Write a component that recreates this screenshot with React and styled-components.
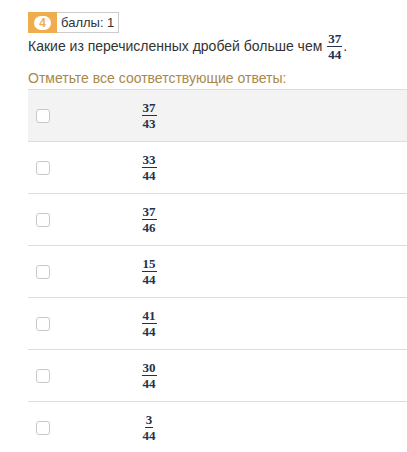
import React from "react";
import styled, { createGlobalStyle } from "styled-components";

const Global = createGlobalStyle`
  html, body { margin: 0; padding: 0; background: #fff; }
  body { font-family: "Liberation Sans", Arial, sans-serif; color: #333; }
`;

const Page = styled.div`
  padding: 12px 0 0 28px;
  width: 379px;
  overflow: hidden;
`;

const Header = styled.div`
  display: flex;
  align-items: stretch;
  height: 21px;
`;

const Number = styled.div`
  background: #f0ad4e;
  width: 29px;
  display: flex;
  align-items: center;
  justify-content: center;
`;

const Pill = styled.span`
  background: #fff;
  color: #f0ad4e;
  font-size: 12px;
  font-weight: bold;
  border-radius: 8px;
  width: 17px;
  height: 14px;
  line-height: 14px;
  text-align: center;
`;

const Points = styled.div`
  border: 1px solid #ccc;
  border-left: none;
  padding: 0 4px;
  font-size: 13px;
  line-height: 19px;
  color: #333;
`;

const Question = styled.div`
  display: flex;
  align-items: center;
  font-size: 14px;
  color: #333;
  margin-top: 1px;
  height: 24px;
`;

const Hint = styled.div`
  margin: 11px 0 2px;
  font-size: 14px;
  color: #a8884a;
  height: 18px;
  line-height: 18px;
`;

const Table = styled.div`
  border-top: 1px solid #ddd;
`;

const Row = styled.div`
  display: flex;
  align-items: center;
  height: 51px;
  border-bottom: 1px solid #ddd;
  background: ${(p) => (p.$shaded ? "#f3f3f3" : "#fff")};
`;

const Check = styled.span`
  width: 12px;
  height: 12px;
  border: 1px solid #c8c8c8;
  border-radius: 3px;
  background: #fff;
  margin-left: 8px;
  flex: none;
`;

const FracCell = styled.div`
  width: 28px;
  margin-left: 85px;
  display: flex;
  justify-content: center;
`;

const Frac = styled.span`
  display: inline-flex;
  flex-direction: column;
  align-items: center;
  font-family: "Liberation Serif", "Times New Roman", serif;
  font-weight: bold;
  font-size: 13px;
  line-height: 11px;
  color: #26304a;
  margin: ${(p) => (p.$inline ? "0 1px 0 5px" : "0")};
`;

const Num = styled.span`
  padding: 0 1px 2px;
  border-bottom: 1px solid #26304a;
`;

const Den = styled.span`
  padding: 2px 1px 0;
`;

const Fraction = ({ n, d, inline }) => (
  <Frac $inline={inline}>
    <Num>{n}</Num>
    <Den>{d}</Den>
  </Frac>
);

const answers = [
  [37, 43],
  [33, 44],
  [37, 46],
  [15, 44],
  [41, 44],
  [30, 44],
  [3, 44],
];

export default function App() {
  return (
    <>
      <Global />
      <Page>
        <Header>
          <Number>
            <Pill>4</Pill>
          </Number>
          <Points>баллы: 1</Points>
        </Header>
        <Question>
          Какие из перечисленных дробей больше чем
          <Fraction n={37} d={44} inline />.
        </Question>
        <Hint>Отметьте все соответствующие ответы:</Hint>
        <Table>
          {answers.map(([n, d], i) => (
            <Row key={i} $shaded={i === 0}>
              <Check />
              <FracCell>
                <Fraction n={n} d={d} />
              </FracCell>
            </Row>
          ))}
        </Table>
      </Page>
    </>
  );
}
